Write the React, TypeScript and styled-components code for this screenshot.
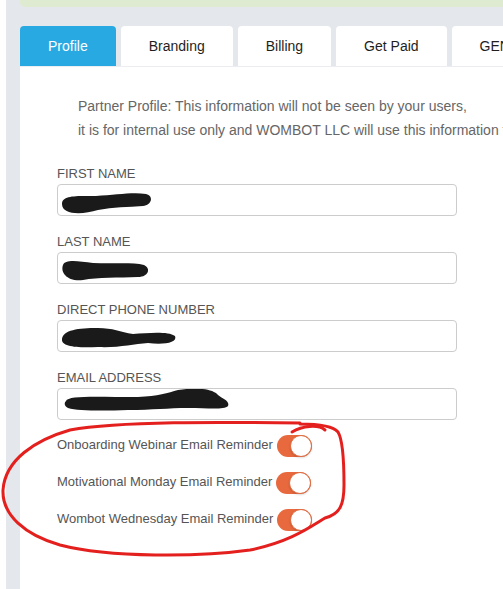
import React from "react";
import styled, { createGlobalStyle } from "styled-components";

const Global = createGlobalStyle`
  html, body { margin: 0; padding: 0; overflow: hidden; background: #ffffff; }
  body { font-family: "Liberation Sans", Arial, sans-serif; }
`;

const Page = styled.div`
  position: relative;
  display: flex;
  width: 900px;
  min-height: 589px;
  background: #ffffff;
`;

const Edge = styled.div`
  width: 6px;
  flex: none;
  background: #ffffff;
`;

const Main = styled.div`
  flex: 1;
  background: #e4e7eb;
  padding-left: 14px;
  display: flex;
  flex-direction: column;
  min-height: 589px;
`;

const Alert = styled.div`
  height: 7px;
  background: #dfebd0;
  border-bottom-left-radius: 5px;
  margin-bottom: 19px;
`;

const Tabs = styled.div`
  display: flex;
  gap: 5px;
`;

const Tab = styled.div<{ $active?: boolean }>`
  height: 40px;
  padding: 0 28px;
  display: flex;
  align-items: center;
  justify-content: center;
  font-size: 14px;
  border-radius: 4px 4px 0 0;
  background: ${(p) => (p.$active ? "#29a9e1" : "#ffffff")};
  color: ${(p) => (p.$active ? "#ffffff" : "#1e1e1e")};
  white-space: nowrap;
`;

const Panel = styled.div`
  flex: 1;
  background: #ffffff;
  border-top: 1px solid #ebedf0;
  padding: 27px 0 0 37px;
`;

const Intro = styled.p`
  margin: 0 0 24px 21px;
  font-size: 14px;
  line-height: 24px;
  color: #666666;
  white-space: nowrap;
`;

const Field = styled.div`
  width: 400px;
  margin-bottom: 18px;
`;

const Label = styled.div`
  font-size: 13px;
  line-height: 15px;
  color: #555555;
  margin-bottom: 3px;
`;

const InputBox = styled.div`
  height: 32px;
  box-sizing: border-box;
  border: 1px solid #cccccc;
  border-radius: 4px;
  background: #ffffff;
  svg { display: block; }
`;

const Toggles = styled.div`
  display: flex;
  flex-direction: column;
  gap: 15px;
  margin-top: -3px;
`;

const ToggleRow = styled.div`
  display: flex;
  align-items: center;
  gap: 4px;
  height: 22px;
  font-size: 13px;
  color: #555555;
`;

const ToggleText = styled.span`
  padding-bottom: 3px;
`;

const Switch = styled.span`
  position: relative;
  width: 35px;
  height: 22px;
  border-radius: 11px;
  background: #e8693d;
  flex: none;
`;

const Knob = styled.span`
  position: absolute;
  top: 0;
  right: 0;
  width: 22px;
  height: 22px;
  box-sizing: border-box;
  border-radius: 50%;
  background: #ffffff;
  border: 1px solid #e06a3f;
  box-shadow: 0 1px 2px rgba(0, 0, 0, 0.15);
`;

const Annotation = styled.svg`
  position: absolute;
  left: 0;
  top: 0;
  pointer-events: none;
`;

const scribbles: Record<string, string> = {
  first:
    "M4,19 C4,10 18,11 38,11 C58,10 74,7 88,9 C96,11 94,20 85,21 C70,22 55,22 40,25 C24,30 4,30 4,19 Z",
  last:
    "M5,12 C7,6 20,8 35,10 C55,11 75,9 86,12 C93,15 91,24 80,24 C60,25 40,24 25,27 C10,29 2,20 5,12 Z",
  phone:
    "M4,18 C5,9 20,7 40,7 C55,7 62,11 75,13 C90,12 110,10 117,15 C120,22 105,24 90,22 C75,23 60,27 40,26 C20,27 3,26 4,18 Z",
  email:
    "M8,12 C10,6 40,8 80,8 C100,7 110,4 120,1 C140,-2 155,0 160,6 C165,10 172,12 170,17 C166,21 150,19 130,19 C110,19 95,21 70,21 C45,22 20,22 10,19 C6,17 6,14 8,12 Z",
};

const fields = [
  { label: "FIRST NAME", key: "first" },
  { label: "LAST NAME", key: "last" },
  { label: "DIRECT PHONE NUMBER", key: "phone" },
  { label: "EMAIL ADDRESS", key: "email" },
];

const reminders = [
  "Onboarding Webinar Email Reminder",
  "Motivational Monday Email Reminder",
  "Wombot Wednesday Email Reminder",
];

export default function App() {
  return (
    <>
      <Global />
      <Page>
        <Edge />
        <Main>
          <Alert />
          <Tabs>
            <Tab $active>Profile</Tab>
            <Tab>Branding</Tab>
            <Tab>Billing</Tab>
            <Tab>Get Paid</Tab>
            <Tab>GENERAL</Tab>
          </Tabs>
          <Panel>
            <Intro>
              Partner Profile: This information will not be seen by your users,
              <br />
              it is for internal use only and WOMBOT LLC will use this information to contact you.
            </Intro>
            {fields.map((f) => (
              <Field key={f.key}>
                <Label>{f.label}</Label>
                <InputBox>
                  <svg width="200" height="30" viewBox="0 0 200 30">
                    <path d={scribbles[f.key]} fill="#1a1a1a" />
                  </svg>
                </InputBox>
              </Field>
            ))}
            <Toggles>
              {reminders.map((r) => (
                <ToggleRow key={r}>
                  <ToggleText>{r}</ToggleText>
                  <Switch>
                    <Knob />
                  </Switch>
                </ToggleRow>
              ))}
            </Toggles>
          </Panel>
        </Main>
        <Annotation width="503" height="589" viewBox="0 0 503 589">
          <g fill="none" stroke="#e3201e" strokeWidth="3" strokeLinecap="round">
            <path d="M325,430 C318,424 302,426 292,432" />
            <path d="M300,423 C220,422 120,421 70,430 C35,440 5,460 3,490 C2,515 25,535 60,545 C110,558 200,557 250,550 C290,542 310,527 325,518 C340,514 344,505 344,485 C344,460 343,440 338,432 C333,426 318,424 300,424" />
          </g>
        </Annotation>
      </Page>
    </>
  );
}
